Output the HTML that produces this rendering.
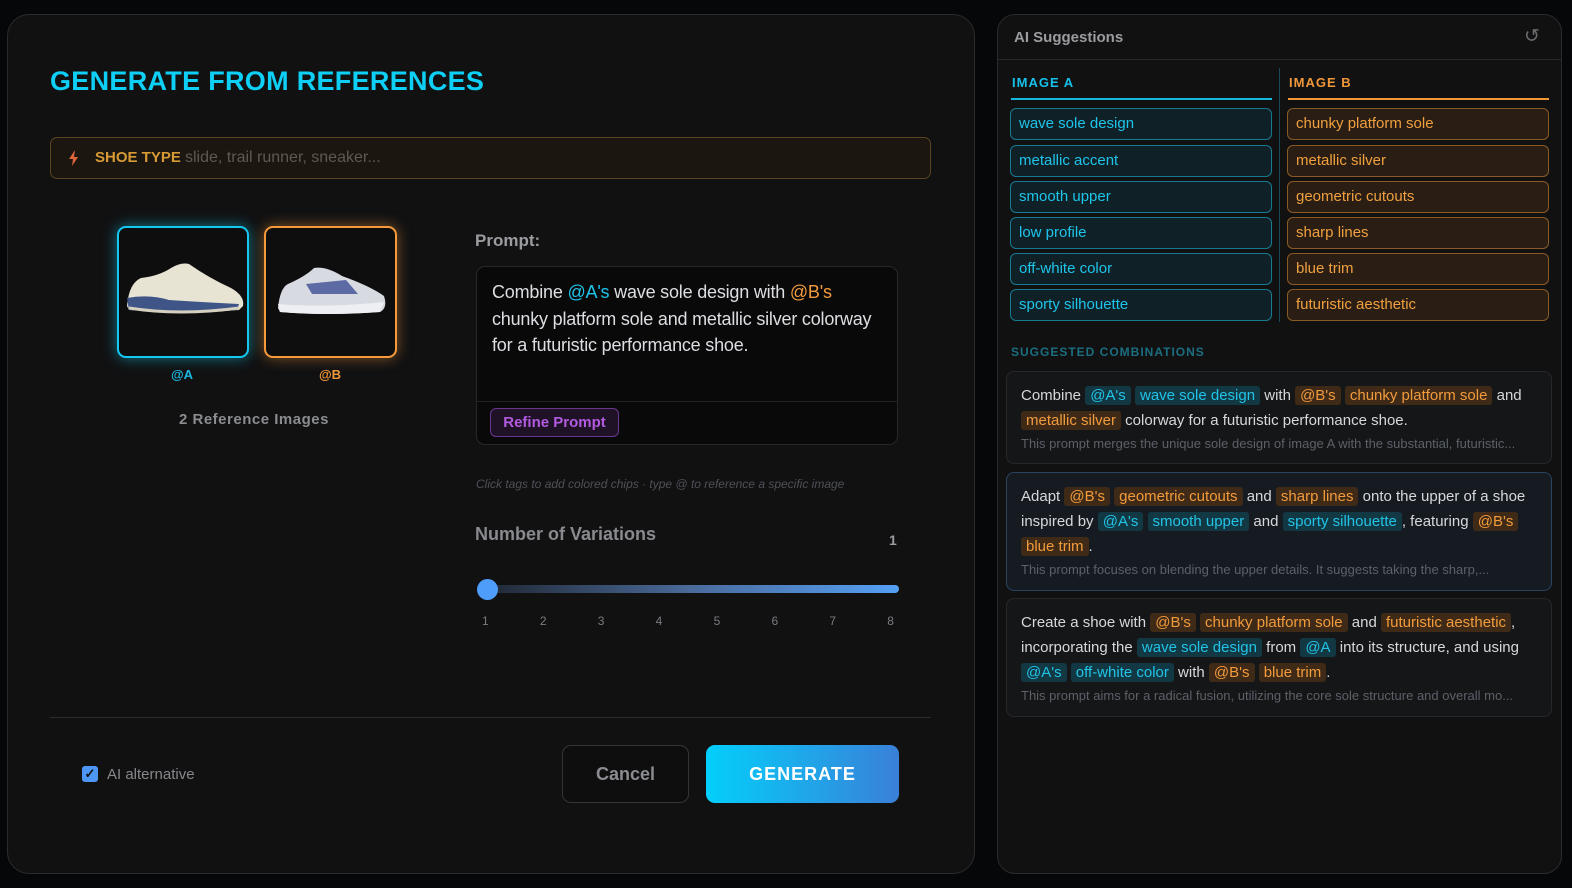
<!DOCTYPE html>
<html><head><meta charset="utf-8"><style>
*{box-sizing:border-box;margin:0;padding:0}
body{width:1572px;height:888px;background:#060708;font-family:"Liberation Sans",sans-serif;position:relative;overflow:hidden}
.abs{position:absolute}
.panel{position:absolute;background:#111112;border:1px solid #2a2b2e;border-radius:22px}
.chip{position:absolute;height:32px;border-radius:6px;font-size:15px;padding:0 8px;line-height:30px}
.ca{border:1px solid #177a90;background:#0f2127;color:#1ec4ea}
.cb{border:1px solid #8a5a25;background:#2a1e14;color:#f0a03e}
.card{position:absolute;left:1006px;width:546px;border-radius:8px;border:1px solid #26282c;background:#151617;padding:11px 14px;font-size:15px;color:#d6d8dc;line-height:25px}
.ta{background:#123844;color:#22c3e6;padding:1px 5px;border-radius:3px}
.tb{background:#3e2a17;color:#f29b3c;padding:1px 5px;border-radius:3px}
.desc{color:#5c6068;font-size:13px;line-height:22px;white-space:nowrap;overflow:hidden}
</style></head><body>
<div class="panel" style="left:7px;top:14px;width:968px;height:860px"></div>
<div class="abs" style="left:50px;top:66px;font-size:27px;font-weight:bold;color:#0ecff5;letter-spacing:0.3px">GENERATE FROM REFERENCES</div>
<div class="abs" style="left:50px;top:137px;width:881px;height:42px;border:1px solid #5a4420;border-radius:7px;background:#1b1710"></div>
<svg class="abs" style="left:68px;top:150px" width="12" height="16" viewBox="0 0 12 16"><path d="M7 0L1 9h4l-1 7 6-9H6z" fill="#e0643a"/></svg>
<div class="abs" style="left:95px;top:149px;font-size:15px;font-weight:bold;color:#d79a35">SHOE TYPE</div>
<div class="abs" style="left:185px;top:149px;font-size:16px;color:#5e5a50">slide, trail runner, sneaker...</div>

<div class="abs" style="left:117px;top:226px;width:132px;height:132px;border:2px solid #14c8f0;border-radius:9px;background:#0e0e0f;box-shadow:0 0 14px rgba(20,200,240,.55)">
<svg width="128" height="128" viewBox="0 0 128 128"><path d="M8 78 Q10 55 22 50 Q40 48 52 40 Q62 34 70 36 Q90 50 112 60 Q126 68 124 78 L120 82 Q70 86 10 82Z" fill="#e8e4d4"/><path d="M8 70 Q30 66 50 72 Q80 74 120 76 L118 82 Q60 86 10 82Z" fill="#3f5487"/><path d="M10 80 Q60 88 120 80" stroke="#d5d0c0" stroke-width="3" fill="none"/></svg></div>
<div class="abs" style="left:264px;top:226px;width:133px;height:132px;border:2px solid #f5993a;border-radius:9px;background:#0e0e0f;box-shadow:0 0 14px rgba(245,153,58,.5)">
<svg width="129" height="128" viewBox="0 0 129 128"><path d="M12 80 Q14 60 22 56 Q40 48 48 40 Q60 38 76 48 Q104 58 118 68 Q122 80 114 84 Q60 88 14 84Z" fill="#d8dae2"/><path d="M40 56 L80 52 L92 66 L46 66Z" fill="#3d4f94" opacity=".8"/><path d="M12 76 Q60 80 118 74 L114 84 Q60 88 14 84Z" fill="#eeeff3"/></svg></div>
<div class="abs" style="left:171px;top:367px;font-size:13px;font-weight:bold;color:#1cb8e0">@A</div>
<div class="abs" style="left:319px;top:367px;font-size:13px;font-weight:bold;color:#f0973a">@B</div>
<div class="abs" style="left:179px;top:411px;font-size:15px;color:#8a8c90;font-weight:bold;letter-spacing:.5px">2 Reference Images</div>

<div class="abs" style="left:475px;top:231px;font-size:17px;color:#9a9ca0;font-weight:bold">Prompt:</div>
<div class="abs" style="left:476px;top:266px;width:422px;height:179px;border:1px solid #26282c;border-radius:9px;background:#09090a"></div>
<div class="abs" style="left:476px;top:401px;width:422px;height:1px;background:#222428"></div>
<div class="abs" style="left:492px;top:279px;width:395px;font-size:18px;line-height:26.5px;color:#dcdee2;letter-spacing:-0.2px">Combine <span style="color:#1ec4ea">@A's</span> wave sole design with <span style="color:#f29b3c">@B's</span> chunky platform sole and metallic silver colorway for a futuristic performance shoe.</div>
<div class="abs" style="left:490px;top:408px;width:129px;height:29px;border:1px solid #6b3690;border-radius:6px;background:#1f1226;color:#b25be0;font-weight:bold;font-size:15px;text-align:center;line-height:27px">Refine Prompt</div>
<div class="abs" style="left:476px;top:477px;font-size:12px;font-style:italic;color:#4e5056">Click tags to add colored chips · type @ to reference a specific image</div>
<div class="abs" style="left:475px;top:524px;font-size:18px;font-weight:bold;color:#888a8e">Number of Variations</div>
<div class="abs" style="left:889px;top:532px;font-size:14px;font-weight:bold;color:#9a9ca0">1</div>
<div class="abs" style="left:478px;top:585px;width:421px;height:8px;border-radius:4px;background:linear-gradient(90deg,#1e2530,#4a6a9a 50%,#55a0f5)"></div>
<div class="abs" style="left:477px;top:579px;width:21px;height:21px;border-radius:50%;background:#4f9dfa"></div>
<div class="abs" style="left:482px;top:614px;width:412px;display:flex;justify-content:space-between;font-size:12px;color:#7a7c80"><span>1</span><span>2</span><span>3</span><span>4</span><span>5</span><span>6</span><span>7</span><span>8</span></div>

<div class="abs" style="left:50px;top:717px;width:881px;height:1px;background:#2a2c30"></div>
<div class="abs" style="left:82px;top:766px;width:16px;height:16px;border-radius:3px;background:#4d96f5;color:#111;font-size:13px;text-align:center;line-height:16px;font-weight:bold">✓</div>
<div class="abs" style="left:107px;top:766px;font-size:15px;color:#85878b">AI alternative</div>
<div class="abs" style="left:562px;top:745px;width:127px;height:58px;border:1px solid #333538;border-radius:9px;background:#0e0e0f;color:#8a8c90;font-weight:bold;font-size:18px;text-align:center;line-height:56px">Cancel</div>
<div class="abs" style="left:706px;top:745px;width:193px;height:58px;border-radius:9px;background:linear-gradient(90deg,#03cffb,#3a80d8);color:#fff;font-weight:bold;font-size:18px;text-align:center;line-height:58px;letter-spacing:1px">GENERATE</div>

<div class="panel" style="left:997px;top:14px;width:565px;height:860px;border-radius:18px"></div>
<div class="abs" style="left:998px;top:59px;width:563px;height:1px;background:#26282c"></div>
<div class="abs" style="left:1014px;top:29px;font-size:15px;font-weight:bold;color:#9a9ca0">AI Suggestions</div>
<div class="abs" style="left:1524px;top:25px;font-size:19px;color:#6a6c70">↺</div>
<div class="abs" style="left:1012px;top:75px;font-size:13px;font-weight:bold;color:#16c0ea;letter-spacing:1px">IMAGE A</div>
<div class="abs" style="left:1289px;top:75px;font-size:13px;font-weight:bold;color:#f0973a;letter-spacing:1px">IMAGE B</div>
<div class="abs" style="left:1011px;top:98px;width:261px;height:2px;background:#16b8e0"></div>
<div class="abs" style="left:1288px;top:98px;width:261px;height:2px;background:#f0973a"></div>
<div class="abs" style="left:1279px;top:68px;width:1px;height:254px;background:#1a4a58"></div>

<div class="chip ca" style="left:1010px;top:108px;width:262px">wave sole design</div>
<div class="chip ca" style="left:1010px;top:145px;width:262px">metallic accent</div>
<div class="chip ca" style="left:1010px;top:181px;width:262px">smooth upper</div>
<div class="chip ca" style="left:1010px;top:217px;width:262px">low profile</div>
<div class="chip ca" style="left:1010px;top:253px;width:262px">off-white color</div>
<div class="chip ca" style="left:1010px;top:289px;width:262px">sporty silhouette</div>
<div class="chip cb" style="left:1287px;top:108px;width:262px">chunky platform sole</div>
<div class="chip cb" style="left:1287px;top:145px;width:262px">metallic silver</div>
<div class="chip cb" style="left:1287px;top:181px;width:262px">geometric cutouts</div>
<div class="chip cb" style="left:1287px;top:217px;width:262px">sharp lines</div>
<div class="chip cb" style="left:1287px;top:253px;width:262px">blue trim</div>
<div class="chip cb" style="left:1287px;top:289px;width:262px">futuristic aesthetic</div>

<div class="abs" style="left:1011px;top:345px;font-size:12px;font-weight:bold;color:#1a6e80;letter-spacing:1px">SUGGESTED COMBINATIONS</div>

<div class="card" style="top:371px;height:93px">Combine <span class="ta">@A's</span> <span class="ta">wave sole design</span> with <span class="tb">@B's</span> <span class="tb">chunky platform sole</span> and <span class="tb">metallic silver</span> colorway for a futuristic performance shoe.<div class="desc">This prompt merges the unique sole design of image A with the substantial, futuristic...</div></div>
<div class="card" style="top:472px;height:119px;background:#161b22;border-color:#2a4460">Adapt <span class="tb">@B's</span> <span class="tb">geometric cutouts</span> and <span class="tb">sharp lines</span> onto the upper of a shoe inspired by <span class="ta">@A's</span> <span class="ta">smooth upper</span> and <span class="ta">sporty silhouette</span>, featuring <span class="tb">@B's</span> <span class="tb">blue trim</span>.<div class="desc">This prompt focuses on blending the upper details. It suggests taking the sharp,...</div></div>
<div class="card" style="top:598px;height:119px">Create a shoe with <span class="tb">@B's</span> <span class="tb">chunky platform sole</span> and <span class="tb">futuristic aesthetic</span>, incorporating the <span class="ta">wave sole design</span> from <span class="ta">@A</span> into its structure, and using <span class="ta">@A's</span> <span class="ta">off-white color</span> with <span class="tb">@B's</span> <span class="tb">blue trim</span>.<div class="desc">This prompt aims for a radical fusion, utilizing the core sole structure and overall mo...</div></div>
</body></html>
